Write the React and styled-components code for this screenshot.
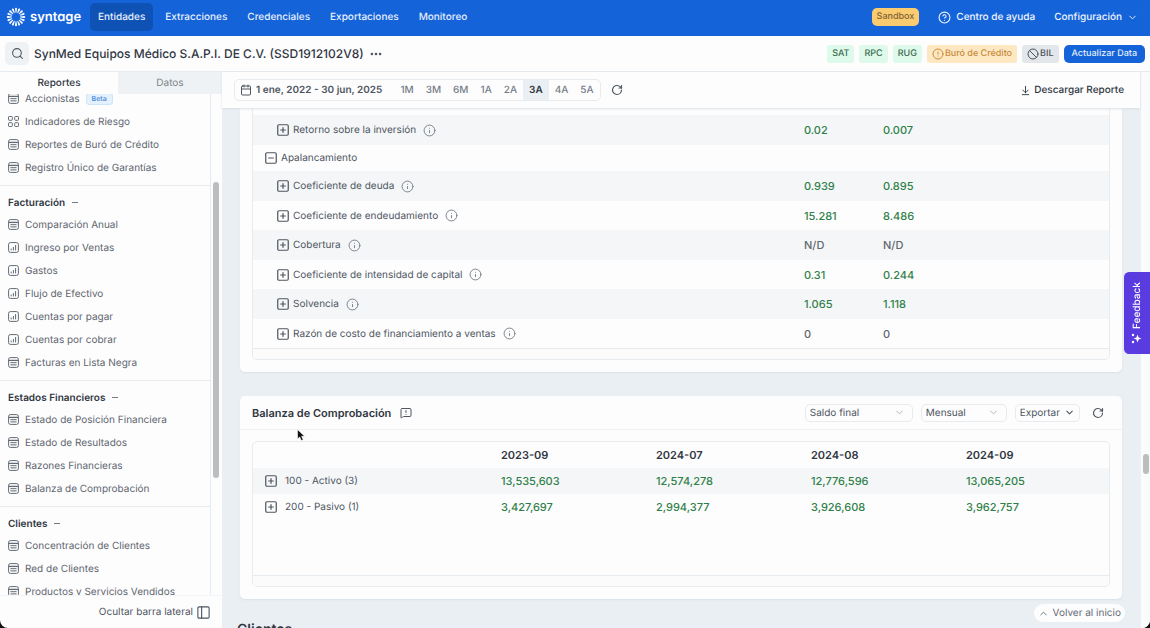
import React from "react";
import styled, { createGlobalStyle, css } from "styled-components";
import {
  Search, Calendar, RotateCw, ArrowDownToLine, CircleHelp, ChevronDown, ChevronUp,
  CircleAlert, Ban, Info, SquarePlus, SquareMinus, MessageSquareWarning, PanelLeft, Ellipsis,
} from "lucide-react";

const c = {
  blue: "#1463d9",
  blueDark: "#0f52b6",
  ink: "#30363f",
  text: "#4f565f",
  muted: "#7d858e",
  line: "#e6ebef",
  page: "#e9eff3",
  surface: "#fdfdfe",
  stripe: "#f4f6f8",
  green: "#2f8048",
};

const Global = createGlobalStyle`
  *, *::before, *::after { box-sizing: border-box; }
  html, body { margin: 0; background: #111; }
  body { text-rendering: geometricPrecision; }
  body, button, select { font-family: Inter, "Liberation Sans", sans-serif; font-size: 10px; color: ${c.text}; }
  button, select { text-rendering: inherit; }
  button { background: none; border: 0; padding: 0; cursor: pointer; }
  a { color: inherit; text-decoration: none; }
  h1, h2, h3, ul { margin: 0; padding: 0; }
  svg { flex: none; display: block; }
`;

const Shell = styled.div`
  height: 100vh;
  display: flex;
  flex-direction: column;
  overflow: hidden;
  background: ${c.surface};
  border-radius: 0 0 8px 8px;
`;

const TopBar = styled.header`
  height: 36px;
  flex: none;
  display: flex;
  align-items: center;
  padding: 0 12px 2px 6px;
  background: ${c.blue};
  color: #fff;
`;
const Brand = styled.a`
  display: flex;
  align-items: center;
  gap: 4px;
  width: 84px;
  font-size: 13px;
  font-weight: 600;
  font-feature-settings: "cv11";
`;
const TopNav = styled.nav`
  display: flex;
  gap: 4px;
  flex: 1;
`;
const NavLink = styled.a`
  height: 28px;
  line-height: 28px;
  padding: 0 8px;
  border-radius: 5px;
  font-weight: 500;
  color: #e8f0fc;
  background: ${(p) => (p.$active ? c.blueDark : "transparent")};
`;
const TopTools = styled.div`
  display: flex;
  align-items: center;
  gap: 19px;
`;
const Sandbox = styled.span`
  padding: 0 5px;
  line-height: 18px;
  border-radius: 5px;
  background: #fbcb70;
  color: #7c6337;
  font-size: 9px;
  font-weight: 500;
`;
const TopTool = styled.button`
  display: flex;
  align-items: center;
  gap: 5px;
  color: #f0f5fd;
  font-weight: 500;
`;

const EntityBar = styled.div`
  height: 36px;
  flex: none;
  display: flex;
  align-items: center;
  padding: 0 5px;
  gap: 5px;
  border-bottom: 1px solid ${c.line};
`;
const SearchButton = styled.button`
  width: 24px;
  height: 23px;
  display: grid;
  place-items: center;
  border-radius: 5px;
  background: #eef2f5;
`;
const EntityName = styled.h1`
  font-size: 12px;
  font-weight: 500;
  color: ${c.ink};
  white-space: nowrap;
`;
const MoreButton = styled.button`
  margin: 0 auto 0 0;
`;
const tones = {
  ok: css`background: #defaea; color: #3c6b50;`,
  warn: css`background: #fde8c2; color: #c98b3e;`,
  off: css`background: #e3e7ec; color: #4b525b;`,
};
const Chip = styled.span`
  display: flex;
  align-items: center;
  gap: 1px;
  height: 18px;
  padding: 0 5px;
  border-radius: 3px;
  font-size: 9px;
  font-weight: 500;
  white-space: nowrap;
  ${(p) => tones[p.$tone]}
`;
const UpdateButton = styled.button`
  height: 18px;
  padding: 0 8px;
  border-radius: 5px;
  background: ${c.blue};
  color: #e3edfb;
  font-size: 9px;
  font-weight: 500;
  white-space: nowrap;
`;

const Body = styled.div`
  flex: 1;
  min-height: 0;
  display: flex;
`;

const Sidebar = styled.aside`
  width: 222px;
  flex: none;
  display: flex;
  flex-direction: column;
`;
const Tabs = styled.div`
  display: flex;
  flex: none;
  height: 22px;
  position: relative;
  background: ${c.surface};
`;
const Tab = styled.button`
  flex: ${(p) => (p.$active ? "0 0 118px" : "1")};
  background: ${(p) => (p.$active ? c.surface : "#eef2f4")};
  color: ${(p) => (p.$active ? c.ink : c.muted)};
  font-weight: ${(p) => (p.$active ? 500 : 400)};
`;
const SideScroll = styled.div`
  flex: 1;
  min-height: 0;
  display: flex;
  overflow: hidden;
`;
const SideGroups = styled.nav`
  flex: 1;
  margin-top: -7px;
`;
const SideGroup = styled.section`
  padding-bottom: 6px;
  border-bottom: 1px solid ${c.line};
`;
const GroupTitle = styled.button`
  display: flex;
  align-items: center;
  gap: 7px;
  height: 27px;
  padding: 6px 8px 0;
  font-weight: 600;
  color: ${c.ink};
`;
const Dash = styled.span`
  width: 6px;
  height: 1px;
  background: #737b84;
`;
const SideList = styled.ul`
  list-style: none;
`;
const SideLink = styled.a`
  display: flex;
  align-items: center;
  gap: 6px;
  height: 23px;
  padding-left: 8px;
  color: #5f666e;
  white-space: nowrap;
`;
const Beta = styled.span`
  padding: 0 5px;
  line-height: 10px;
  border: 1px solid #cfe4f5;
  border-radius: 3px;
  background: #e3f1fc;
  color: #4285d6;
  font-size: 7px;
  font-weight: 500;
`;
const SideTrack = styled.div`
  width: 12px;
  padding: 88px 2px 0;
  border-left: 1px solid ${c.line};
`;
const SideThumb = styled.div`
  width: 6px;
  height: 296px;
  border-radius: 3px;
  background: #bcbdbf;
`;
const HideButton = styled.button`
  display: flex;
  align-items: center;
  justify-content: flex-end;
  gap: 3px;
  flex: none;
  height: 33px;
  padding-right: 11px;
  border-top: 1px solid #f3f5f7;
`;

const Main = styled.main`
  flex: 1;
  min-width: 0;
  display: flex;
  flex-direction: column;
  background: ${c.page};
`;
const Toolbar = styled.div`
  flex: none;
  display: flex;
  align-items: center;
  height: 36px;
  padding: 0 16px 0 12px;
  background: ${c.surface};
  box-shadow: 0 1px 2px #d9e0e6;
  position: relative;
`;
const RangeGroup = styled.div`
  display: flex;
  align-items: stretch;
  height: 22px;
  border: 1px solid ${c.line};
  border-radius: 5px;
  margin-right: 10px;
  overflow: hidden;
`;
const DateButton = styled.button`
  display: flex;
  align-items: center;
  gap: 4px;
  padding: 0 12px 0 5px;
  font-weight: 600;
  white-space: nowrap;
`;
const RangeButton = styled.button`
  padding: 0 6px;
  color: ${(p) => (p.$active ? c.ink : "#747c85")};
  font-weight: ${(p) => (p.$active ? 600 : 500)};
  background: ${(p) => (p.$active ? "#e9eff3" : "transparent")};
`;
const Download = styled.button`
  display: flex;
  align-items: center;
  gap: 3px;
  margin-left: auto;
  color: ${c.ink};
  font-weight: 500;
`;
const Content = styled.div`
  flex: 1;
  min-height: 0;
  overflow: hidden;
  padding: 0 18px;
`;
const Card = styled.section`
  margin-bottom: 24px;
  background: ${c.surface};
  border-radius: ${(p) => (p.$continued ? "0 0 5px 5px" : "5px")};
  box-shadow: 0 1px 2px #dbe2e7;
`;
const CardHead = styled.div`
  display: flex;
  align-items: center;
  gap: 9px;
  height: 34px;
  padding: 0 18px 0 12px;
  border-bottom: 1px solid #f0f2f4;
`;
const CardTitle = styled.h2`
  font-size: 11px;
  font-weight: 600;
  color: ${c.ink};
`;
const CardTools = styled.div`
  display: flex;
  align-items: center;
  gap: 8px;
  margin-left: auto;
`;
const SelectBox = styled.label`
  display: grid;
  align-items: center;
  width: ${(p) => p.$width}px;
  height: 18px;
  border: 1px solid ${c.line};
  border-radius: 5px;
  & > * { grid-area: 1 / 1; }
  & > svg { justify-self: end; margin-right: 7px; pointer-events: none; }
`;
const Select = styled.select`
  appearance: none;
  width: 100%;
  height: 16px;
  padding: 0 4px;
  border: 0;
  background: transparent;
`;
const ExportButton = styled.button`
  display: flex;
  align-items: center;
  gap: 4px;
  height: 18px;
  margin-right: 4px;
  padding: 0 4px;
  border: 1px solid ${c.line};
  border-radius: 5px;
`;
const CardBody = styled.div`
  padding: ${(p) => (p.$continued ? "0" : "11px")} 12px 12px;
`;
const TableFrame = styled.div`
  border: 1px solid ${c.line};
  border-top-width: ${(p) => (p.$continued ? 0 : 1)}px;
  border-radius: ${(p) => (p.$continued ? "0 0 5px 5px" : "5px")};
  padding-top: ${(p) => (p.$continued ? 7 : 0)}px;
  overflow: hidden;
`;
const TableTrack = styled.div`
  height: 11px;
  margin-top: ${(p) => p.$space}px;
  border-top: 1px solid ${c.line};
  background: #fbfbfc;
`;
const Table = styled.table`
  width: 100%;
  table-layout: fixed;
  border-collapse: collapse;
`;
const Row = styled.tr`
  height: ${(p) => p.$height}px;
  background: ${(p) => (p.$striped ? c.stripe : "transparent")};
`;
const HeadCell = styled.th`
  padding: 0 12px;
  text-align: left;
  font-size: 11px;
  font-weight: 600;
  color: ${c.ink};
  width: ${(p) => (p.$width ? `${p.$width}px` : "auto")};
`;
const Cell = styled.td`
  padding: 0 12px;
  font-size: 11px;
  font-weight: 500;
  color: ${(p) => (p.$plain ? "#5f666e" : c.green)};
`;
const LabelCell = styled.th`
  padding: 0 0 0 ${(p) => (p.$nested ? 23 : 11)}px;
  text-align: left;
  font-weight: 400;
`;
const Label = styled.div`
  display: flex;
  align-items: center;
  gap: ${(p) => p.$gap}px;
  white-space: nowrap;
`;
const Hint = styled.span`
  margin-left: 4px;
  color: #7a828b;
`;
const NextTitle = styled.h2`
  font-size: 14px;
  line-height: 14px;
  font-weight: 600;
  color: ${c.ink};
  margin-left: -3px;
`;

const PageTrack = styled.div`
  width: 10px;
  flex: none;
  padding: 382px 2px 0;
  background: #fafbfc;
  border-left: 1px solid #eef1f4;
`;
const PageThumb = styled.div`
  width: 6px;
  height: 20px;
  border-radius: 3px;
  background: #bcbdbf;
`;

const BackToTop = styled.button`
  position: fixed;
  right: 25px;
  bottom: 6px;
  display: flex;
  align-items: center;
  gap: 4px;
  height: 18px;
  padding: 0 4px;
  border-radius: 9px;
  background: ${c.surface};
  color: #656c75;
`;
const Feedback = styled.button`
  position: fixed;
  right: 0;
  top: 272px;
  width: 26px;
  height: 82px;
  display: flex;
  align-items: center;
  justify-content: center;
  gap: 4px;
  writing-mode: vertical-rl;
  transform: rotate(180deg);
  border-radius: 0 5px 5px 0;
  background: #5a3be0;
  color: #fff;
  font-weight: 500;
`;
const Pointer = styled.svg`
  position: fixed;
  left: 296px;
  top: 428px;
`;

const Sunburst = () => (
  <svg width="20" height="20" viewBox="-10 -10 20 20" aria-hidden="true">
    {Array.from({ length: 16 }, (_, i) => (
      <path
        key={i}
        transform={`rotate(${i * 22.5})`}
        d="M-.4-4.2L-1-8.2Q-1-9.2 0-9.2Q1-9.2 1-8.2L.4-4.2Z"
        fill="#fff"
      />
    ))}
  </svg>
);

const SideIcon = ({ kind }) => (
  <svg width="11" height="11" viewBox="0 0 11 11" fill="none" stroke="#626971" strokeWidth="1" aria-hidden="true">
    {kind === "grid" ? (
      <>
        <rect x=".5" y=".5" width="3.8" height="3.8" rx=".7" />
        <rect x="6.7" y=".5" width="3.8" height="3.8" rx=".7" />
        <rect x=".5" y="6.7" width="3.8" height="3.8" rx=".7" />
        <rect x="6.7" y="6.7" width="3.8" height="3.8" rx=".7" />
      </>
    ) : kind === "chart" ? (
      <>
        <rect x=".6" y=".6" width="9.8" height="9.8" rx="1.8" />
        <path d="M3.2 8.4V6.6M5.4 8.4V5M7.6 8.4V3" />
      </>
    ) : (
      <>
        <rect x=".6" y=".6" width="9.8" height="9.8" rx="1.8" />
        <path d="M.6 3.4H10.4" strokeWidth="1.3" />
        <path d="M2.4 5.7H8.6M2.4 7.9H8.6" />
      </>
    )}
  </svg>
);

const sideGroups = [
  {
    items: [
      ["Accionistas", "table", true],
      ["Indicadores de Riesgo", "grid"],
      ["Reportes de Buró de Crédito", "table"],
      ["Registro Único de Garantías", "table"],
    ],
  },
  {
    title: "Facturación",
    items: [
      ["Comparación Anual", "table"],
      ["Ingreso por Ventas", "chart"],
      ["Gastos", "chart"],
      ["Flujo de Efectivo", "chart"],
      ["Cuentas por pagar", "chart"],
      ["Cuentas por cobrar", "chart"],
      ["Facturas en Lista Negra", "table"],
    ],
  },
  {
    title: "Estados Financieros",
    items: [
      ["Estado de Posición Financiera", "table"],
      ["Estado de Resultados", "table"],
      ["Razones Financieras", "table"],
      ["Balanza de Comprobación", "table"],
    ],
  },
  {
    title: "Clientes",
    items: [
      ["Concentración de Clientes", "table"],
      ["Red de Clientes", "table"],
      ["Productos y Servicios Vendidos", "table"],
    ],
  },
];

const ratios = [
  { label: "Retorno sobre la inversión", values: ["0.02", "0.007"] },
  { label: "Apalancamiento", group: true, values: ["", ""] },
  { label: "Coeficiente de deuda", values: ["0.939", "0.895"] },
  { label: "Coeficiente de endeudamiento", values: ["15.281", "8.486"] },
  { label: "Cobertura", values: ["N/D", "N/D"], plain: true },
  { label: "Coeficiente de intensidad de capital", values: ["0.31", "0.244"] },
  { label: "Solvencia", values: ["1.065", "1.118"] },
  { label: "Razón de costo de financiamiento a ventas", values: ["0", "0"], plain: true },
];

const months = ["2023-09", "2024-07", "2024-08", "2024-09"];
const balances = [
  { label: "100 - Activo (3)", values: ["13,535,603", "12,574,278", "12,776,596", "13,065,205"] },
  { label: "200 - Pasivo (1)", values: ["3,427,697", "2,994,377", "3,926,608", "3,962,757"] },
];

const ratioRowHeight = (ratio, striped) => {
  if (ratio.group) return 26;
  return striped ? 30 : 29;
};

const Toggle = ({ open, name }) => (
  <button type="button" aria-label={`${open ? "Contraer" : "Expandir"} ${name}`}>
    {open ? <SquareMinus size={14} strokeWidth={2.1} /> : <SquarePlus size={14} strokeWidth={2.1} />}
  </button>
);

const MenuSelect = ({ label, width, options }) => (
  <SelectBox $width={width}>
    <Select aria-label={label}>
      {options.map((o) => <option key={o}>{o}</option>)}
    </Select>
    <ChevronDown size={11} color="#a9b0b8" />
  </SelectBox>
);

export default function App() {
  return (
    <Shell>
      <Global />
      <TopBar>
        <Brand href="#"><Sunburst />syntage</Brand>
        <TopNav>
          {["Entidades", "Extracciones", "Credenciales", "Exportaciones", "Monitoreo"].map((n, i) => (
            <NavLink key={n} href="#" $active={i === 0}>{n}</NavLink>
          ))}
        </TopNav>
        <TopTools>
          <Sandbox>Sandbox</Sandbox>
          <TopTool type="button"><CircleHelp size={13} />Centro de ayuda</TopTool>
          <TopTool type="button">Configuración<ChevronDown size={11} /></TopTool>
        </TopTools>
      </TopBar>

      <EntityBar>
        <SearchButton type="button" aria-label="Buscar"><Search size={13} /></SearchButton>
        <EntityName>SynMed Equipos Médico S.A.P.I. DE C.V. (SSD1912102V8)</EntityName>
        <MoreButton type="button" aria-label="Más opciones"><Ellipsis size={14} strokeWidth={2.4} /></MoreButton>
        <Chip $tone="ok">SAT</Chip>
        <Chip $tone="ok">RPC</Chip>
        <Chip $tone="ok">RUG</Chip>
        <Chip $tone="warn"><CircleAlert size={12} />Buró de Crédito</Chip>
        <Chip $tone="off"><Ban size={12} />BIL</Chip>
        <UpdateButton type="button">Actualizar Data</UpdateButton>
      </EntityBar>

      <Body>
        <Sidebar>
          <Tabs role="tablist">
            <Tab type="button" role="tab" aria-selected="true" $active>Reportes</Tab>
            <Tab type="button" role="tab" aria-selected="false">Datos</Tab>
          </Tabs>
          <SideScroll>
            <SideGroups>
              {sideGroups.map((g, i) => (
                <SideGroup key={i}>
                  {g.title && <GroupTitle type="button">{g.title}<Dash /></GroupTitle>}
                  <SideList>
                    {g.items.map(([name, kind, beta]) => (
                      <li key={name}>
                        <SideLink href="#"><SideIcon kind={kind} />{name}{beta && <Beta>Beta</Beta>}</SideLink>
                      </li>
                    ))}
                  </SideList>
                </SideGroup>
              ))}
            </SideGroups>
            <SideTrack><SideThumb /></SideTrack>
          </SideScroll>
          <HideButton type="button">Ocultar barra lateral<PanelLeft size={15} strokeWidth={1.8} /></HideButton>
        </Sidebar>

        <Main>
          <Toolbar>
            <RangeGroup>
              <DateButton type="button"><Calendar size={12} />1 ene, 2022 - 30 jun, 2025</DateButton>
              {["1M", "3M", "6M", "1A", "2A", "3A", "4A", "5A"].map((r) => (
                <RangeButton key={r} type="button" $active={r === "3A"}>{r}</RangeButton>
              ))}
            </RangeGroup>
            <button type="button" aria-label="Actualizar"><RotateCw size={12} strokeWidth={2.4} /></button>
            <Download type="button"><ArrowDownToLine size={11} />Descargar Reporte</Download>
          </Toolbar>

          <Content>
            <Card $continued>
              <CardBody $continued>
                <TableFrame $continued>
                  <Table>
                    <colgroup>
                      <col />
                      <col style={{ width: 79 }} />
                      <col style={{ width: 79 }} />
                      <col style={{ width: 159 }} />
                    </colgroup>
                    <tbody>
                      {ratios.map((r, i) => (
                        <Row key={r.label} $height={ratioRowHeight(r, i % 2 === 0)} $striped={i % 2 === 0}>
                          <LabelCell scope="row" $nested={!r.group}>
                            <Label $gap={3}>
                              <Toggle open={r.group} name={r.label} />
                              {r.label}
                              {!r.group && <Hint><Info size={13} strokeWidth={1.8} /></Hint>}
                            </Label>
                          </LabelCell>
                          {r.values.map((v, k) => <Cell key={k} $plain={r.plain}>{v}</Cell>)}
                          <Cell />
                        </Row>
                      ))}
                    </tbody>
                  </Table>
                  <TableTrack $space={0} />
                </TableFrame>
              </CardBody>
            </Card>

            <Card>
              <CardHead>
                <CardTitle>Balanza de Comprobación</CardTitle>
                <MessageSquareWarning size={12} />
                <CardTools>
                  <MenuSelect label="Tipo de saldo" width={108} options={["Saldo final", "Saldo inicial"]} />
                  <MenuSelect label="Periodicidad" width={86} options={["Mensual", "Anual"]} />
                  <ExportButton type="button">Exportar<ChevronDown size={11} strokeWidth={2.4} /></ExportButton>
                  <button type="button" aria-label="Actualizar balanza"><RotateCw size={12} strokeWidth={2.4} /></button>
                </CardTools>
              </CardHead>
              <CardBody>
                <TableFrame>
                  <Table>
                    <thead>
                      <Row $height={26}>
                        <HeadCell $width={236} aria-label="Cuenta" />
                        {months.map((m) => <HeadCell key={m} scope="col">{m}</HeadCell>)}
                      </Row>
                    </thead>
                    <tbody>
                      {balances.map((b, i) => (
                        <Row key={b.label} $height={26} $striped={i === 0}>
                          <LabelCell scope="row">
                            <Label $gap={7}><Toggle name={b.label} />{b.label}</Label>
                          </LabelCell>
                          {b.values.map((v) => <Cell key={v}>{v}</Cell>)}
                        </Row>
                      ))}
                    </tbody>
                  </Table>
                  <TableTrack $space={55} />
                </TableFrame>
              </CardBody>
            </Card>
            <NextTitle>Clientes</NextTitle>
          </Content>
        </Main>
        <PageTrack><PageThumb /></PageTrack>
      </Body>

      <Feedback type="button">
        <svg width="11" height="11" viewBox="0 0 11 11" fill="#fff" aria-hidden="true">
          <path d="M4.5 1.5L5.6 4.4L8.5 5.5L5.6 6.6L4.5 9.5L3.4 6.6L.5 5.5L3.4 4.4Z" />
          <circle cx="9" cy="2" r="1.2" />
          <circle cx="9" cy="9" r="1.2" />
        </svg>
        Feedback
      </Feedback>
      <BackToTop type="button"><ChevronUp size={11} />Volver al inicio</BackToTop>
      <Pointer width="10" height="14" viewBox="0 0 10 14" aria-hidden="true">
        <path d="M1.5 1.5V11L3.7 9L5.3 12.6L7.2 11.8L5.6 8.3H8.6Z" fill="#111" stroke="#fff" strokeWidth=".6" />
      </Pointer>
    </Shell>
  );
}
